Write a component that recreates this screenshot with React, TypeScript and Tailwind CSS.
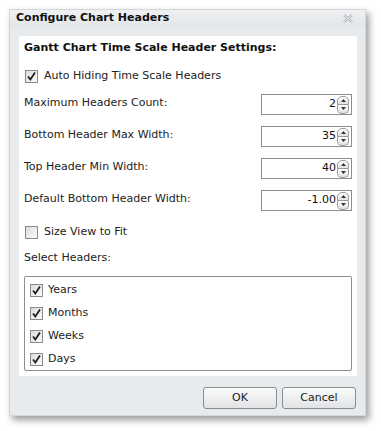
import React from 'react';

const font = { fontFamily: '"DejaVu Sans", Verdana, sans-serif' };

const Check = ({ checked }: { checked: boolean }) => (
  <div className="w-[13px] h-[13px] shrink-0 border border-[#8a8a8a] bg-gradient-to-br from-[#dcdcdc] to-[#fbfbfb] flex items-center justify-center">
    {checked && (
      <svg width="11" height="11" viewBox="0 0 11 11">
        <path d="M2 5.5 L4.3 8.5 L9 1.5" fill="none" stroke="#1a1a1a" strokeWidth="1.7" />
      </svg>
    )}
  </div>
);

const Spin = ({ value }: { value: string }) => (
  <div className="w-[91px] h-[21px] border border-[#8c8f92] bg-white flex items-center justify-end pr-[2px]">
    <span className="text-[11px] text-[#111] mr-[1px]">{value}</span>
    <div className="flex flex-col">
      <div className="w-[12px] h-[9px] border border-[#9a9a9a] rounded-t-[5px] bg-gradient-to-b from-white to-[#e3e3e3] flex items-center justify-center">
        <svg width="5" height="3" viewBox="0 0 5 3"><path d="M0 3 L2.5 0 L5 3Z" fill="#333" /></svg>
      </div>
      <div className="w-[12px] h-[9px] border border-t-0 border-[#9a9a9a] rounded-b-[5px] bg-gradient-to-b from-white to-[#e3e3e3] flex items-center justify-center">
        <svg width="5" height="3" viewBox="0 0 5 3"><path d="M0 0 L2.5 3 L5 0Z" fill="#333" /></svg>
      </div>
    </div>
  </div>
);

const rows = [
  { label: 'Maximum Headers Count:', value: '2' },
  { label: 'Bottom Header Max Width:', value: '35' },
  { label: 'Top Header Min Width:', value: '40' },
  { label: 'Default Bottom Header Width:', value: '-1.00' },
];

export default function App() {
  return (
    <div className="w-[381px] h-[431px] bg-white pt-[9px] pl-[9px]" style={font}>
      <div className="w-[357px] h-[407px] bg-[#e8ebee] border border-[#d4d7da] shadow-[3px_4px_7px_rgba(0,0,0,0.4)] flex flex-col">
        <div className="h-[17px] bg-gradient-to-b from-[#eef0f2] to-[#e3e6e9] flex items-center justify-between pl-[6px] pr-[12px]">
          <span className="text-[11px] font-bold text-[#111]">Configure Chart Headers</span>
          <svg width="10" height="9" viewBox="0 0 10 9">
            <path d="M1 1 L9 8 M9 1 L1 8" stroke="#b5b8bb" strokeWidth="2.4" />
            <path d="M1 1 L9 8 M9 1 L1 8" stroke="#f4f5f6" strokeWidth="0.8" />
          </svg>
        </div>
        <div className="ml-[9px] mr-[8px] mt-[9px] h-[340px] bg-white pl-[5px] pr-[5px] pt-[5px] flex flex-col">
          <div className="text-[11px] font-bold text-[#111] leading-[14px]">Gantt Chart Time Scale Header Settings:</div>
          <div className="flex items-center gap-[6px] mt-[14px] h-[14px]">
            <div className="ml-[1px]"><Check checked /></div>
            <span className="text-[11px] text-[#222]">Auto Hiding Time Scale Headers</span>
          </div>
          <div className="flex flex-col gap-[11px] mt-[11px]">
            {rows.map((r) => (
              <div key={r.label} className="flex justify-between items-start h-[21px]">
                <span className="text-[11px] text-[#222] mt-[1px]">{r.label}</span>
                <Spin value={r.value} />
              </div>
            ))}
          </div>
          <div className="flex items-center gap-[6px] mt-[14px] h-[14px]">
            <div className="ml-[1px]"><Check checked={false} /></div>
            <span className="text-[11px] text-[#222]">Size View to Fit</span>
          </div>
          <div className="text-[11px] text-[#222] mt-[12px] leading-[14px]">Select Headers:</div>
          <div className="mt-[11px] h-[95px] border border-[#8c8f92] rounded-[2px] pl-[5px] pt-[6px] flex flex-col gap-[9px]">
            {['Years', 'Months', 'Weeks', 'Days'].map((h) => (
              <div key={h} className="flex items-center gap-[5px] h-[14px]">
                <Check checked />
                <span className="text-[11px] text-[#222]">{h}</span>
              </div>
            ))}
          </div>
        </div>
        <div className="flex justify-end gap-[5px] mt-[11px] mr-[9px]">
          <button className="w-[74px] h-[22px] border border-[#8a8d90] rounded-[3px] bg-gradient-to-b from-[#fbfbfb] to-[#e1e3e5] text-[11px] text-[#222]">OK</button>
          <button className="w-[74px] h-[22px] border border-[#8a8d90] rounded-[3px] bg-gradient-to-b from-[#fbfbfb] to-[#e1e3e5] text-[11px] text-[#222]">Cancel</button>
        </div>
      </div>
    </div>
  );
}
